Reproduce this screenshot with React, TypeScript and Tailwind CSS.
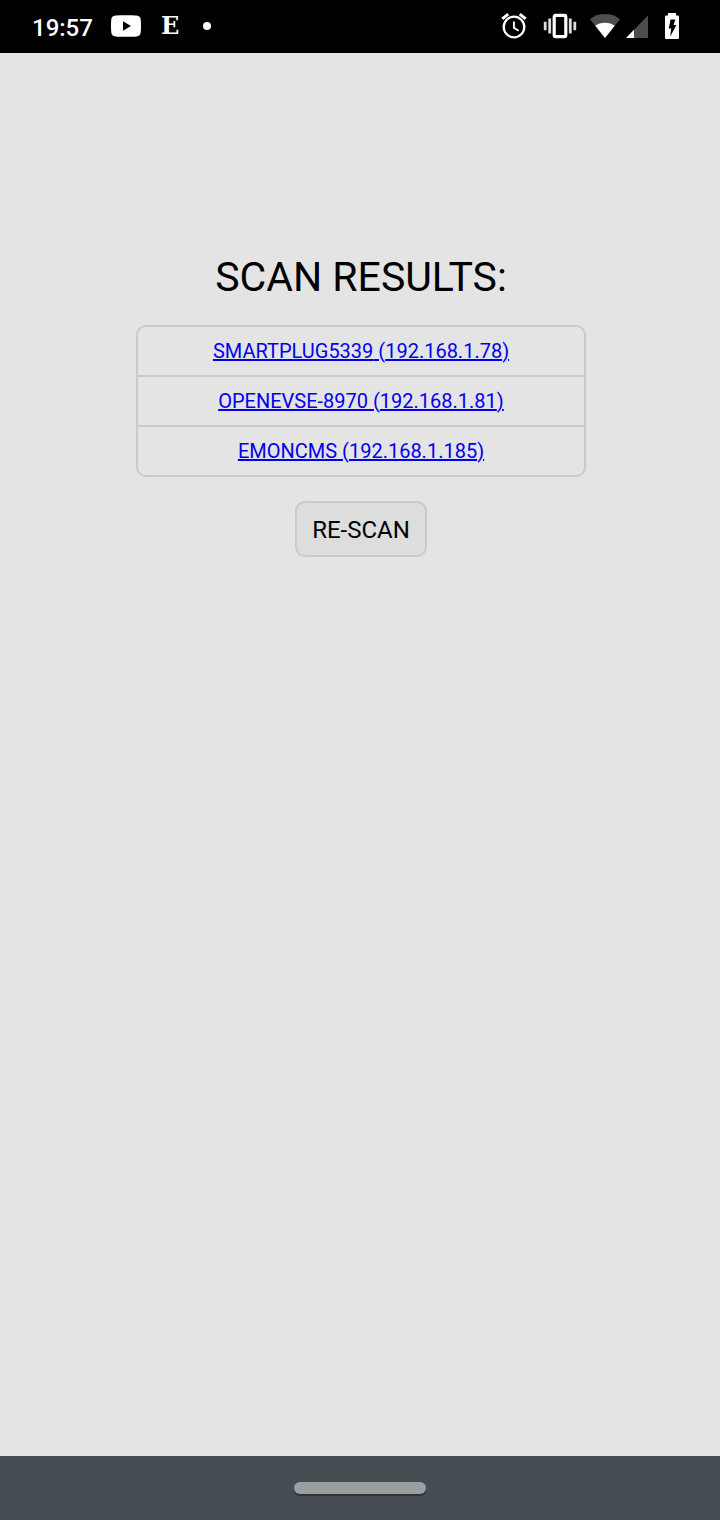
const devices = [
  { name: 'SMARTPLUG5339', ip: '192.168.1.78' },
  { name: 'OPENEVSE-8970', ip: '192.168.1.81' },
  { name: 'EMONCMS', ip: '192.168.1.185' },
];

function VideoIcon() {
  return (
    <svg width="30" height="22" viewBox="0 0 30 22" aria-hidden="true">
      <path
        fill="#fff"
        d="M4.5.6C8 .1 22 .1 25.500.6 28.200.9 29.500 2.200 29.700 4.500 30.100 8 30.100 14 29.700 17.500 29.500 19.800 28.200 21.100 25.500 21.400 22 21.900 8 21.900 4.500 21.400 1.800 21.100.5 19.800.3 17.500-.1 14-.1 8 .3 4.500.5 2.200 1.800.9 4.500.6Z"
      />
      <path fill="#000" d="M12 6.300 20 11l-8 4.700Z" />
    </svg>
  );
}

function AlarmIcon() {
  return (
    <svg width="26" height="26" viewBox="0 0 26 26" fill="none" stroke="#fff" aria-hidden="true">
      <circle cx="13" cy="14" r="10.300" strokeWidth="2.300" />
      <path d="M1.300 5.900 7.200 1.200M24.700 5.900 18.800 1.200" strokeWidth="3" />
      <path d="M12.900 8.500v6.300l4.800 2.900" strokeWidth="1.900" />
    </svg>
  );
}

function VibrateIcon() {
  return (
    <svg width="34" height="26" viewBox="0 0 34 26" aria-hidden="true">
      <rect x="11.200" y="2.400" width="11.600" height="21.200" rx="1.300" fill="none" stroke="#fff" strokeWidth="3.200" />
      <path fill="#ddd" d="M5.300 5.500h2.800v15H5.300ZM25.900 5.500h2.800v15h-2.800ZM.8 8.700h2.800v8.600H.8ZM30.400 8.700h2.800v8.600h-2.800Z" />
    </svg>
  );
}

function WifiIcon() {
  return (
    <svg width="30" height="26" viewBox="0 0 30 26" aria-hidden="true">
      <path fill="#4d4d4d" d="M15 25 0 6.200C4 2.800 9 1 15 1s11 1.800 15 5.200Z" />
      <path fill="#fff" d="M15 25 5.300 12.800C7.800 10.800 11 9.700 15 9.700s7.200 1.100 9.700 3.100Z" />
    </svg>
  );
}

function SignalIcon() {
  return (
    <svg width="22" height="26" viewBox="0 0 22 26" aria-hidden="true">
      <path fill="#4d4d4d" d="M0 25 22 2.500V25Z" />
      <path fill="#fff" d="M0 25 8 16.800V25Z" />
    </svg>
  );
}

function BatteryIcon() {
  return (
    <svg width="14" height="26" viewBox="0 0 14 26" aria-hidden="true">
      <path fill="#fff" d="M3 0h8v2.600h2q1 0 1 1V25q0 1-1 1H1q-1 0-1-1V3.600q0-1 1-1h2Z" />
      <path fill="#000" d="M5.600 6.500h4.700L8.600 12h2.800L5.300 23.500l.9-8H3.700Z" />
    </svg>
  );
}

export default function App() {
  return (
    <div className="flex min-h-screen flex-col bg-[#e4e4e4] font-[Roboto,sans-serif] text-black">
      <header className="flex h-[53px] items-center justify-between bg-black pr-[41px] pb-0.5 pl-8 text-white">
        <div className="flex items-center">
          <time className="pt-1 text-2xl leading-8 font-medium">19:57</time>
          <div className="ml-[18px]">
            <VideoIcon />
          </div>
          <span className="ml-5 font-['DejaVu_Serif',serif] text-2xl leading-8 font-bold">E</span>
          <span className="ml-6 size-2 rounded-full bg-white" />
        </div>
        <div className="flex items-center">
          <AlarmIcon />
          <div className="ml-4">
            <VibrateIcon />
          </div>
          <div className="ml-[13px]">
            <WifiIcon />
          </div>
          <div className="ml-1.5">
            <SignalIcon />
          </div>
          <div className="ml-[17px]">
            <BatteryIcon />
          </div>
        </div>
      </header>

      <main className="flex flex-1 flex-col items-center pt-[200px] pl-0.5">
        <h1 className="text-[41px] leading-[48px]">SCAN RESULTS:</h1>
        <ul className="mt-6 w-[450px] max-w-full divide-y-2 divide-[#cacaca] rounded-[10px] border-2 border-[#cacaca] text-center">
          {devices.map((device) => (
            <li key={device.name} className="text-xl leading-[48px]">
              <a href={`http://${device.ip}/`} className="text-[#0000ee] underline decoration-2">
                {device.name} ({device.ip})
              </a>
            </li>
          ))}
        </ul>
        <button
          type="button"
          className="mt-6 rounded-[10px] border-2 border-[#cacaca] bg-[#dddddd] px-[15px] pt-[11px] pb-[9px] text-2xl leading-8"
        >
          RE-SCAN
        </button>
      </main>

      <footer className="flex h-16 items-center justify-center bg-[#454d52]">
        <div className="h-3 w-[132px] rounded-full bg-[#9a9e9f] shadow-[0_2px_1px_#2c3135]" />
      </footer>
    </div>
  );
}
